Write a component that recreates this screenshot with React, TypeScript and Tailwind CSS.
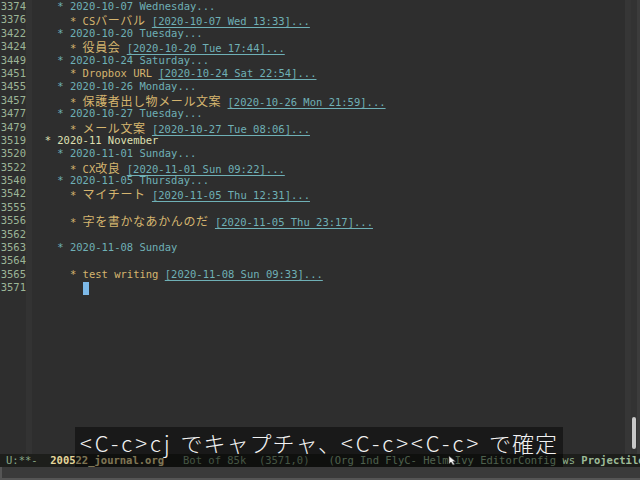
import React from 'react';

type Seg = { text: string; cls: string; link?: boolean };
type Line = { num: string; segs: Seg[] };

const L2 = 'text-[#6fb0b6]';
const L3 = 'text-[#d5b56f]';
const L1 = 'text-[#dfe0b2]';

const day = (num: string, text: string): Line => ({ num, segs: [{ text: `    * ${text}`, cls: L2 }] });
const item = (num: string, title: string, stamp: string): Line => ({
  num,
  segs: [
    { text: `      * ${title} `, cls: L3 },
    { text: `[${stamp}]...`, cls: L2, link: true },
  ],
});

const lines: Line[] = [
  day('3374', '2020-10-07 Wednesday...'),
  item('3376', 'CSバーバル', '2020-10-07 Wed 13:33'),
  day('3422', '2020-10-20 Tuesday...'),
  item('3424', '役員会', '2020-10-20 Tue 17:44'),
  day('3449', '2020-10-24 Saturday...'),
  item('3451', 'Dropbox URL', '2020-10-24 Sat 22:54'),
  day('3455', '2020-10-26 Monday...'),
  item('3457', '保護者出し物メール文案', '2020-10-26 Mon 21:59'),
  day('3477', '2020-10-27 Tuesday...'),
  item('3479', 'メール文案', '2020-10-27 Tue 08:06'),
  { num: '3519', segs: [{ text: '  * 2020-11 November', cls: L1 }] },
  day('3520', '2020-11-01 Sunday...'),
  item('3522', 'CX改良', '2020-11-01 Sun 09:22'),
  day('3540', '2020-11-05 Thursday...'),
  item('3542', 'マイチート', '2020-11-05 Thu 12:31'),
  { num: '3555', segs: [] },
  item('3556', '字を書かなあかんのだ', '2020-11-05 Thu 23:17'),
  { num: '3562', segs: [] },
  day('3563', '2020-11-08 Sunday'),
  { num: '3564', segs: [] },
  item('3565', 'test writing', '2020-11-08 Sun 09:33'),
];

const CJK = /([\u3000-\u30ff\u4e00-\u9fff\uff00-\uffef]+)/;

// CJK glyphs take two columns in the buffer
function Mixed({ text }: { text: string }) {
  return (
    <>
      {text.split(CJK).map((part, i) =>
        CJK.test(part) ? (
          <span key={i} className="font-['Noto_Sans_CJK_JP',sans-serif] text-[12px] tracking-[0.6px]">
            {part}
          </span>
        ) : (
          <span key={i}>{part}</span>
        )
      )}
    </>
  );
}

function Row({ line, cursor }: { line: Line; cursor?: boolean }) {
  return (
    <div className="flex h-[13.4px] leading-[13.4px]">
      <div className="w-[26px] shrink-0 text-right text-[#9cb597]">{line.num}</div>
      <div className="w-[6px] shrink-0 bg-[#333333]" />
      <div className="whitespace-pre">
        {line.segs.map((s, i) => (
          <span key={i} className={`${s.cls} ${s.link ? 'underline decoration-[#6fb0b6] underline-offset-[2px]' : ''}`}>
            <Mixed text={s.text} />
          </span>
        ))}
        {cursor && (
          <>
            <span>{'        '}</span>
            <span className="inline-block h-[13px] w-[6px] translate-y-[1px] bg-[#7db9e8]" />
          </>
        )}
      </div>
    </div>
  );
}

// subtitle: latin parts are set wider than the CJK parts
function Caption({ text }: { text: string }) {
  return (
    <>
      {text.split(CJK).map((part, i) =>
        CJK.test(part) ? (
          <span key={i} className="tracking-[1px]">{part}</span>
        ) : (
          <span key={i} className="tracking-[3px]">{part}</span>
        )
      )}
    </>
  );
}

export default function App() {
  return (
    <div className="relative flex h-[480px] w-[640px] flex-col overflow-hidden bg-[#2e2e2e] font-['DejaVu_Sans_Mono',monospace] text-[10.5px]">
      {/* buffer */}
      <div className="flex min-h-0 flex-1">
        <div className="flex flex-1 flex-col">
          {lines.map((l) => (
            <Row key={l.num} line={l} />
          ))}
          <Row line={{ num: '3571', segs: [] }} cursor />
          <div className="flex flex-1">
            <div className="w-[26px]" />
            <div className="w-[6px] bg-[#333333]" />
          </div>
        </div>
        {/* scrollbar */}
        <div className="flex w-[15px] shrink-0">
          <div className="w-[6px] bg-[#363636]" />
          <div className="flex w-[6px] flex-col justify-end bg-[#333333] pb-[5px]">
            <div className="mx-auto h-[32px] w-[4px] rounded-full bg-[#c8c8c8]" />
          </div>
          <div className="w-[3px] bg-[#3c3c3c]" />
        </div>
      </div>

      {/* mode line */}
      <div className="flex h-[13px] shrink-0 items-center whitespace-pre bg-[#1d1e1b] pl-[6px] leading-[13px]">
        <span className="text-[#8aa887]">{'U:**-  '}</span>
        <span className="font-bold text-[#e6d69a]">200522_journal.org</span>
        <span className="text-[#7f9c7c]">{'   Bot of 85k  (3571,0)   '}</span>
        <span className="text-[#8fb08c]">(Org Ind FlyC- Helm Ivy EditorConfig ws </span>
        <span className="font-bold text-[#9dbb98]">Projectile</span>
      </div>

      {/* echo area */}
      <div className="h-[13px] shrink-0 border-b-2 border-l-2 border-[#555555] bg-[#3a3a3a]" />

      {/* caption overlay */}
      <div className="absolute left-[75px] top-[427px] flex h-[40px] w-[488px] items-start bg-black/45 pl-[5px]">
        <span className="mt-[2px] whitespace-pre font-['Noto_Sans_CJK_JP',sans-serif] text-[22px] font-light leading-[26px] text-[#f2f2f2]">
          <Caption text="<C-c>cj でキャプチャ、<C-c><C-c> で確定" />
        </span>
      </div>

      {/* mouse pointer */}
      <svg className="absolute left-[448px] top-[455px]" width="9" height="11" viewBox="0 0 9 11">
        <path d="M1 1 L1 9 L3 7 L5 10 L6.5 9.3 L4.8 6.5 L7.5 6.5 Z" fill="#f4f4f4" stroke="#444" strokeWidth="0.6" />
      </svg>
    </div>
  );
}
